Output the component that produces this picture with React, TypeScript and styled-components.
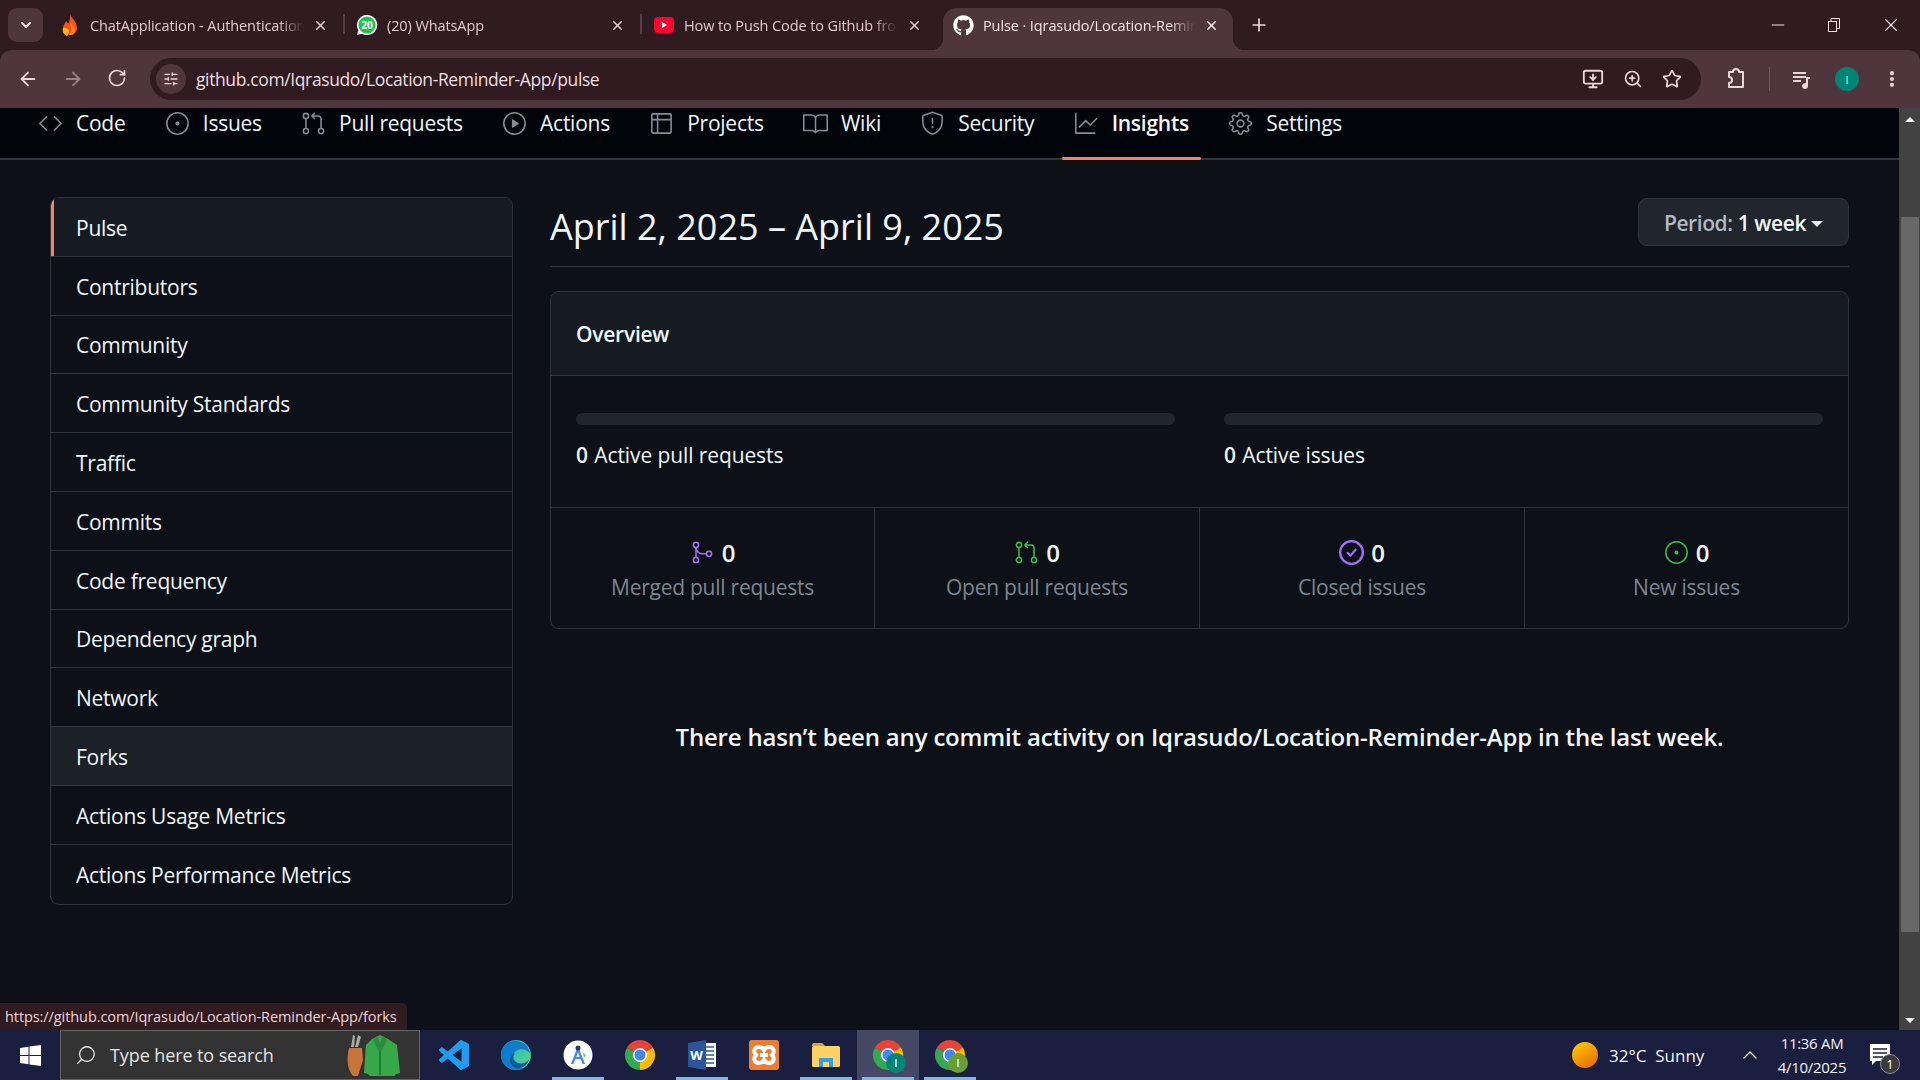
import React from "react";
import styled, { createGlobalStyle } from "styled-components";
import {
  ArrowLeft,
  ArrowRight,
  ChevronDown,
  ChevronUp,
  Minus,
  MonitorDown,
  MoreVertical,
  Plus,
  RotateCw,
  Search,
  SlidersHorizontal,
  Star,
  X,
  ZoomIn,
} from "lucide-react";
import { FaGithub } from "react-icons/fa";
import {
  GoBook,
  GoCode,
  GoGear,
  GoGitMerge,
  GoGitPullRequest,
  GoGraph,
  GoIssueOpened,
  GoPlay,
  GoShield,
  GoTable,
} from "react-icons/go";

const GlobalStyle = createGlobalStyle`
  html, body {
    margin: 0;
    padding: 0;
    background: #0d1117;
    overflow: hidden;
  }
  * {
    box-sizing: border-box;
  }
`;

const UI_FONT = `"Open Sans", "Noto Sans", sans-serif`;

const Screen = styled.div`
  width: 1920px;
  height: 1080px;
  position: relative;
  display: flex;
  flex-direction: column;
  overflow: hidden;
  font-family: ${UI_FONT};
  background: #301b20;
`;

/* browser chrome */

const TabStrip = styled.div`
  height: 50px;
  flex: none;
  display: flex;
  align-items: flex-end;
  padding-left: 8px;
  background: #301b20;
`;

const TabSearch = styled.div`
  width: 35px;
  height: 34px;
  margin: 0 6px 8px 0;
  border-radius: 9px;
  background: #4f363c;
  color: #f0dfe2;
  display: flex;
  align-items: center;
  justify-content: center;
`;

const Tab = styled.div<{ $active?: boolean; $last?: boolean }>`
  position: relative;
  width: ${(p) => (p.$active ? "290px" : "297px")};
  margin-left: ${(p) => (p.$active ? "3px" : "0")};
  height: 42px;
  flex: none;
  display: flex;
  align-items: center;
  gap: 9px;
  padding: 0 18px 8px 10px;
  color: ${(p) => (p.$active ? "#f3e4e7" : "#e3c7cd")};
  background: ${(p) => (p.$active ? "#4f363c" : "transparent")};
  border-radius: 14px 14px 0 0;
  font-size: 14.5px;
  letter-spacing: -0.1px;

  ${(p) =>
    p.$active &&
    `
    padding-left: 9px;
    padding-right: 14px;
    &::after {
      content: "";
      position: absolute;
      right: -12px;
      bottom: 0;
      width: 12px;
      height: 12px;
      background: radial-gradient(circle at 100% 0, transparent 12px, #4f363c 12.5px);
    }
    &::before {
      content: "";
      position: absolute;
      left: -12px;
      bottom: 0;
      width: 12px;
      height: 12px;
      background: radial-gradient(circle at 0 0, transparent 12px, #4f363c 12.5px);
    }
  `}

  ${(p) =>
    !p.$active &&
    !p.$last &&
    `
    &::after {
      content: "";
      position: absolute;
      right: 1px;
      top: 6px;
      width: 2px;
      height: 20px;
      background: #55404a;
    }
  `}
`;

const Favicon = styled.span`
  width: 22px;
  height: 22px;
  flex: none;
  display: flex;
  align-items: center;
  justify-content: center;
`;

const TabTitle = styled.span`
  flex: 1;
  min-width: 0;
  white-space: nowrap;
  overflow: hidden;
  -webkit-mask-image: linear-gradient(90deg, #000 88%, transparent);
  mask-image: linear-gradient(90deg, #000 88%, transparent);
`;

const NewTab = styled.div`
  width: 26px;
  height: 26px;
  margin: 0 0 12px 13px;
  color: #f0d9de;
  display: flex;
  align-items: center;
  justify-content: center;
`;

const WindowControls = styled.div`
  margin-left: auto;
  height: 50px;
  padding-right: 18px;
  display: flex;
  align-items: center;
  gap: 39px;
  color: #f3e4e7;
`;

const Toolbar = styled.div`
  height: 58px;
  flex: none;
  display: flex;
  align-items: center;
  background: #4f363c;
  border-radius: 12px 12px 0 0;
  padding-left: 17px;
  color: #ecd6da;
`;

const NavButtons = styled.div`
  width: 133px;
  display: flex;
  gap: 23px;
`;

const Omnibox = styled.div`
  width: 1551px;
  height: 42px;
  flex: none;
  display: flex;
  align-items: center;
  padding: 0 19px 0 6px;
  background: #301b20;
  border-radius: 21px;
  color: #ecd6da;
`;

const TuneBadge = styled.span`
  width: 30px;
  height: 30px;
  flex: none;
  margin-right: 10px;
  border-radius: 50%;
  background: #4f363c;
  display: flex;
  align-items: center;
  justify-content: center;
`;

const Url = styled.span`
  flex: 1;
  font-size: 17.5px;
  letter-spacing: -0.38px;
  color: #eedfe2;
`;

const OmniActions = styled.div`
  display: flex;
  align-items: center;
  gap: 19px;
`;

const ToolActions = styled.div`
  flex: 1;
  display: flex;
  align-items: center;
  padding-left: 24px;
`;

const ToolDivider = styled.span`
  width: 1px;
  height: 24px;
  margin: 0 22px;
  background: #6d555b;
`;

const Avatar = styled.span`
  width: 24px;
  height: 24px;
  margin: 0 23px;
  border-radius: 50%;
  background: #008577;
  color: #cfeee9;
  font-size: 11px;
  display: flex;
  align-items: center;
  justify-content: center;
`;

/* page */

const Viewport = styled.div`
  flex: 1;
  min-height: 0;
  display: flex;
`;

const Page = styled.div`
  flex: 1;
  min-width: 0;
  background: #0d1117;
  color: #f0f6fc;
  letter-spacing: -0.25px;
`;

const RepoNav = styled.nav`
  height: 52px;
  display: flex;
  align-items: flex-start;
  gap: 15.25px;
  padding-left: 26px;
  background: #010409;
  border-bottom: 2px solid #30363d;
`;

const RepoNavItem = styled.div<{ $active?: boolean }>`
  position: relative;
  height: 50px;
  display: flex;
  align-items: flex-start;
  gap: 13px;
  padding: 0 12px;
  font-size: 21px;
  line-height: 30px;
  font-weight: ${(p) => (p.$active ? 600 : 400)};
  color: #f0f6fc;

  svg {
    margin-top: 3px;
    color: #848d97;
  }

  ${(p) =>
    p.$active &&
    `
    &::after {
      content: "";
      position: absolute;
      left: 0;
      right: 0;
      bottom: -2px;
      height: 3px;
      border-radius: 2px;
      background: #f78166;
    }
  `}
`;

const Content = styled.div`
  display: flex;
  align-items: flex-start;
  gap: 37px;
  padding: 37px 50px 0 50px;
`;

const Sidebar = styled.div`
  width: 463px;
  flex: none;
  border: 1px solid #30363d;
  border-radius: 9px;
  overflow: hidden;
`;

const SideItem = styled.div<{ $active?: boolean; $hover?: boolean }>`
  position: relative;
  height: 58.8px;
  display: flex;
  align-items: center;
  padding: 2px 0 0 25px;
  font-size: 21px;
  color: #f0f6fc;
  border-bottom: 1px solid #30363d;
  background: ${(p) => (p.$active ? "#161b22" : p.$hover ? "#1c2128" : "transparent")};

  &:last-child {
    border-bottom: 0;
  }

  ${(p) =>
    p.$active &&
    `
    &::before {
      content: "";
      position: absolute;
      left: 0;
      top: 0;
      bottom: 0;
      width: 3px;
      background: #f78166;
    }
  `}
`;

const Main = styled.main`
  flex: 1;
  min-width: 0;
`;

const PeriodHeader = styled.div`
  height: 70px;
  display: flex;
  align-items: flex-start;
  justify-content: space-between;
  border-bottom: 1px solid #30363d;
  margin-bottom: 24px;
`;

const DateRange = styled.h1`
  margin: 0;
  font-size: 36px;
  line-height: 60px;
  font-weight: 400;
  letter-spacing: 0;
`;

const PeriodButton = styled.div`
  width: 211px;
  height: 48px;
  margin-top: 1px;
  padding-top: 1px;
  display: flex;
  align-items: center;
  justify-content: center;
  gap: 5px;
  background: #21262d;
  border: 1px solid #30363d;
  border-radius: 9px;
  font-size: 21px;
  color: #b1bac4;
  font-weight: 600;
  letter-spacing: -0.4px;

  b {
    color: #f0f6fc;
    font-weight: 600;
  }
`;

const Caret = styled.span`
  width: 0;
  height: 0;
  margin-top: 3px;
  border-left: 6px solid transparent;
  border-right: 6px solid transparent;
  border-top: 6px solid #e6edf3;
`;

const OverviewBox = styled.section`
  border: 1px solid #30363d;
  border-radius: 9px;
  overflow: hidden;
`;

const OverviewHeader = styled.div`
  height: 84px;
  display: flex;
  align-items: center;
  padding-left: 25px;
  background: #161b22;
  border-bottom: 1px solid #30363d;
  font-size: 21px;
  font-weight: 600;
`;

const ActiveGrid = styled.div`
  height: 132px;
  display: grid;
  grid-template-columns: 1fr 1fr;
  gap: 49px;
  padding: 37px 25px 0 25px;
  border-bottom: 1px solid #30363d;
`;

const ProgressTrack = styled.div`
  height: 12px;
  border-radius: 6px;
  background: #21262d;
`;

const ActiveLabel = styled.div`
  margin-top: 14px;
  font-size: 21px;
  line-height: 32px;
  letter-spacing: -0.1px;

  b {
    font-weight: 600;
    margin-right: 1px;
  }
`;

const StatGrid = styled.div`
  height: 120px;
  display: grid;
  grid-template-columns: 323px 325px 325px 1fr;
`;

const StatCell = styled.div`
  display: flex;
  flex-direction: column;
  align-items: center;
  padding-top: 28px;
  border-left: 1px solid #30363d;

  &:first-child {
    border-left: 0;
  }
`;

const StatValue = styled.div<{ $color: string }>`
  display: flex;
  align-items: center;
  gap: 7px;
  height: 32px;
  font-size: 24px;
  font-weight: 600;

  svg {
    color: ${(p) => p.$color};
  }
`;

const StatLabel = styled.div`
  margin-top: 3px;
  font-size: 21px;
  line-height: 32px;
  color: #7d8590;
`;

const NoActivity = styled.p`
  margin: 90px 0 0;
  text-align: center;
  font-size: 24px;
  line-height: 36px;
  font-weight: 600;
  letter-spacing: -0.18px;
`;

const StatusBubble = styled.div`
  position: absolute;
  left: 0;
  bottom: 50px;
  height: 27px;
  width: 407px;
  padding-left: 5px;
  display: flex;
  align-items: center;
  background: #301b20;
  border-top-right-radius: 5px;
  color: #eed3d8;
  font-size: 14.5px;
  letter-spacing: -0.08px;
`;

const Scrollbar = styled.div`
  width: 21px;
  flex: none;
  position: relative;
  background: #424242;
`;

const ScrollArrow = styled.span<{ $down?: boolean }>`
  position: absolute;
  left: 6px;
  ${(p) => (p.$down ? "bottom: 7px;" : "top: 9px;")}
  width: 0;
  height: 0;
  border-left: 5px solid transparent;
  border-right: 5px solid transparent;
  ${(p) => (p.$down ? "border-top: 5px solid #fff;" : "border-bottom: 5px solid #fff;")}
`;

const ScrollThumb = styled.div`
  position: absolute;
  left: 2px;
  right: 1px;
  top: 109px;
  height: 715px;
  background: #686868;
`;

/* taskbar */

const Taskbar = styled.div`
  height: 50px;
  flex: none;
  display: flex;
  align-items: stretch;
  background: #1a1e3f;
  color: #f2f2f2;
`;

const StartButton = styled.div`
  width: 60px;
  flex: none;
  display: flex;
  align-items: center;
  justify-content: center;
`;

const SearchBox = styled.div`
  width: 360px;
  flex: none;
  display: flex;
  align-items: center;
  padding-left: 14px;
  gap: 13px;
  background: #333333;
  border: 1px solid #666666;
  color: #e4e4e4;
  font-size: 18px;
  letter-spacing: -0.1px;
  margin-right: 3px;
`;

const SearchHero = styled.span`
  margin-left: auto;
  margin-right: 18px;
  display: flex;
`;

const TaskIcons = styled.div`
  display: flex;
`;

const TaskIcon = styled.div<{ $running?: boolean; $current?: boolean }>`
  position: relative;
  width: 62px;
  display: flex;
  align-items: center;
  justify-content: center;
  background: ${(p) => (p.$current ? "#454865" : "transparent")};

  ${(p) =>
    p.$running &&
    `
    &::after {
      content: "";
      position: absolute;
      left: 5px;
      right: 5px;
      bottom: 0;
      height: 3px;
      background: #76b9ed;
    }
  `}
`;

const Tray = styled.div`
  margin-left: auto;
  display: flex;
  align-items: center;
  padding-right: 30px;
`;

const Weather = styled.span`
  margin-left: 11px;
  width: 129px;
  font-size: 17px;
  letter-spacing: 0;
  white-space: pre;
`;

const Clock = styled.div`
  width: 100px;
  margin: 0 8px 0 0;
  text-align: center;
  font-size: 15px;
  line-height: 24px;
  letter-spacing: -0.3px;
`;

const NotifyWrap = styled.span`
  position: relative;
  display: flex;
`;

const NotifyCount = styled.span`
  position: absolute;
  right: -10px;
  bottom: -8px;
  width: 20px;
  height: 20px;
  border-radius: 50%;
  background: #3a3a3f;
  border: 1px solid #888;
  color: #fff;
  font-size: 13px;
  display: flex;
  align-items: center;
  justify-content: center;
`;

/* drawn logos */

const FlameIcon = () => (
  <svg width="18" height="24" viewBox="0 0 18 24">
    <path d="M9 1c1 4 7 7 7 14a7 7 0 0 1-14 0c0-3 2-4 3-7 1 1 2 2 2 3 2-3 2-6 2-10z" fill="#f4511e" />
    <path d="M2 15c2-1 6 0 6 3s-2 5-2 5a7 7 0 0 1-4-8z" fill="#ffb300" />
    <path d="M9 10c3 2 5 4 5 7a5 5 0 0 1-6 5c3-3 3-7 1-12z" fill="#ff8f00" />
  </svg>
);

const WhatsAppIcon = () => (
  <svg width="24" height="24" viewBox="0 0 24 24">
    <path d="M12 1a11 11 0 0 0-9.4 16.6L1 23l5.6-1.5A11 11 0 1 0 12 1z" fill="#fff" />
    <circle cx="12" cy="12" r="9.4" fill="#1fc14f" />
    <text x="12" y="16" textAnchor="middle" fontSize="11" fontWeight="700" fontFamily="Open Sans, sans-serif" fill="#fff">
      20
    </text>
  </svg>
);

const YouTubeIcon = () => (
  <svg width="22" height="22" viewBox="0 0 22 22">
    <rect x="1" y="3" width="20" height="16" rx="4" fill="#f5072f" />
    <path d="M9 8l5 3-5 3z" fill="#fff" />
  </svg>
);

const WindowsLogo = () => (
  <svg width="21" height="21" viewBox="0 0 21 21" fill="#fff">
    <path d="M0 3l8.5-1.2V10H0zM9.5 1.6L21 0v10H9.5zM0 11h8.5v8.2L0 18zM9.5 11H21v10l-11.5-1.6z" />
  </svg>
);

const JacketHero = () => (
  <svg width="56" height="46" viewBox="0 0 56 46">
    <path d="M6 15l2-12 2 1-1 11zM10 15l3-12 3 2-3 10z" fill="#a8a8a8" />
    <path d="M4 16h13l1 12-5 16H8C3 38 1 30 4 16z" fill="#c8743a" />
    <path d="M27 7l8-4 8 4 9 6 3 28-4 1-2 2H25l-2-2-4-1 2-28z" fill="#37a84a" />
    <path d="M32 4l3 8 3-8 4 4-7 14-7-14z" fill="#2b8c3d" />
    <path d="M35 20v23" stroke="#1f7030" strokeWidth="1.5" />
  </svg>
);

const VsCodeLogo = () => (
  <svg width="30" height="30" viewBox="0 0 24 24">
    <path
      d="M23.15 2.587L18.21.21a1.494 1.494 0 0 0-1.705.29l-9.46 8.63-4.12-3.128a.999.999 0 0 0-1.276.057L.327 7.261A1 1 0 0 0 .326 8.74L3.899 12 .326 15.26a1 1 0 0 0 .001 1.479L1.65 17.94a.999.999 0 0 0 1.276.057l4.12-3.128 9.46 8.63a1.492 1.492 0 0 0 1.704.29l4.942-2.377A1.5 1.5 0 0 0 24 20.06V3.939a1.5 1.5 0 0 0-.85-1.352zm-5.146 14.861L10.826 12l7.178-5.448v10.896z"
      fill="#1f9cf0"
    />
  </svg>
);

const EdgeLogo = () => (
  <svg width="30" height="30" viewBox="0 0 30 30">
    <defs>
      <linearGradient id="edgeTop" x1="0" y1="0" x2="1" y2="1">
        <stop offset="0" stopColor="#1aa0d8" />
        <stop offset="1" stopColor="#5fe07a" />
      </linearGradient>
    </defs>
    <circle cx="15" cy="15" r="15" fill="url(#edgeTop)" />
    <path d="M0 15C0 6 7 1 14 1c8 0 14 5 15 12-4-4-10-5-14-2-4 3-5 9-1 13 2 3 6 5 9 4-3 2-5 2-8 2C7 30 0 24 0 15z" fill="#0f7dc9" />
    <path d="M13 20c3 4 10 5 15 0-2 6-8 9-13 8-4-1-6-4-6-8 0-3 2-6 5-7-2 2-2 5-1 7z" fill="#0c59a4" />
  </svg>
);

const StudioLogo = () => (
  <svg width="30" height="30" viewBox="0 0 30 30">
    <circle cx="15" cy="15" r="14.5" fill="#fff" />
    <path d="M15 6l-7 18h2.4l2-5h5.2l2 5H22zM13.300 17L15 12l1.700 5z" fill="#4285f4" />
    <circle cx="15" cy="8" r="2.500" fill="#2a3a55" />
    <path d="M20 13l3 2-2 3z" fill="#3ddc84" />
  </svg>
);

const ChromeLogo = ({ badge }: { badge?: string }) => (
  <svg width="30" height="30" viewBox="0 0 30 30" style={{ overflow: "visible" }}>
    <path d="M15 15L2 7.500A15 15 0 0 1 28 7.500z" fill="#ea4335" />
    <path d="M15 15L28 7.500A15 15 0 0 1 15 30z" fill="#fbbc04" />
    <path d="M15 15L15 30A15 15 0 0 1 2 7.500z" fill="#34a853" />
    <circle cx="15" cy="15" r="7" fill="#fff" />
    <circle cx="15" cy="15" r="5.500" fill="#4285f4" />
    {badge && (
      <>
        <circle cx="23" cy="23" r="10" fill={badge} />
        <rect x="22.200" y="19" width="1.600" height="8" fill="#cfeee0" />
      </>
    )}
  </svg>
);

const WordLogo = () => (
  <svg width="28" height="30" viewBox="0 0 28 30">
    <rect x="10" y="3" width="18" height="24" fill="#fff" />
    <path d="M12 7h14M12 11h14M12 15h14M12 19h14M12 23h14" stroke="#2b579a" strokeWidth="1.600" />
    <path d="M0 3l18-3v30L0 27z" fill="#2b579a" />
    <text x="8.500" y="20" textAnchor="middle" fontSize="13" fontWeight="700" fontFamily="Open Sans, sans-serif" fill="#fff">
      W
    </text>
  </svg>
);

const XamppLogo = () => (
  <svg width="30" height="30" viewBox="0 0 30 30">
    <rect width="30" height="30" rx="3" fill="#ed7d31" />
    <path
      d="M10 7c-5 0-6 5-3 8-3 3-2 8 3 8 2 0 4-1 5-3 1 2 3 3 5 3 5 0 6-5 3-8 3-3 2-8-3-8-2 0-4 1-5 3-1-2-3-3-5-3zM11 15h8"
      fill="none"
      stroke="#fff"
      strokeWidth="4"
    />
  </svg>
);

const FolderLogo = () => (
  <svg width="28" height="26" viewBox="0 0 28 26">
    <path d="M0 3a2 2 0 0 1 2-2h8l3 3h-13z" fill="#e0a81c" />
    <rect y="4" width="28" height="21" rx="1.500" fill="#fcd364" />
    <path d="M7 25v-9h14v9h-4v-5h-6v5z" fill="#2f9fe8" />
  </svg>
);

const SunDisc = () => (
  <svg width="26" height="26" viewBox="0 0 26 26">
    <defs>
      <linearGradient id="sun" x1="0.200" y1="0" x2="0.800" y2="1">
        <stop offset="0" stopColor="#ffc800" />
        <stop offset="1" stopColor="#e86a00" />
      </linearGradient>
    </defs>
    <circle cx="13" cy="13" r="13" fill="url(#sun)" />
  </svg>
);

const RestoreIcon = () => (
  <svg width="14" height="14" viewBox="0 0 14 14" fill="none" stroke="currentColor" strokeWidth="1">
    <rect x="1.500" y="3.500" width="8" height="10" />
    <path d="M4 3.500V.500h8.500v10H9.500" />
  </svg>
);

const MediaIcon = () => (
  <svg width="20" height="20" viewBox="0 0 20 20" fill="currentColor">
    <path d="M1 3h13v2H1zM1 7h13v2H1zM1 11h8v2H1z" />
    <path d="M14 8h4v2h-2v7a3 3 0 1 1-2-2.800z" />
  </svg>
);

const ExtensionIcon = () => (
  <svg width="22" height="24" viewBox="0 0 22 24" fill="none" stroke="currentColor" strokeWidth="2">
    <path d="M4 5h4a3 3 0 0 1 6 0h4v15H4v-4a3 3 0 0 0 0-6z" strokeLinejoin="round" />
  </svg>
);

const NotificationIcon = () => (
  <svg width="20" height="22" viewBox="0 0 20 22">
    <path d="M0 0h20v17H6l-4 4v-4H0z" fill="#fff" />
    <path d="M3 5h14M3 9h14M3 13h10" stroke="#1a1e3f" strokeWidth="1.500" />
  </svg>
);

const ClosedIssueIcon = () => (
  <svg width="25" height="25" viewBox="0 0 16 16" fill="none" stroke="currentColor">
    <circle cx="8" cy="8" r="7.250" strokeWidth="1.500" />
    <path d="M5.500 8.200l1.800 1.800 3.300-3.800" strokeWidth="1.400" strokeLinecap="round" strokeLinejoin="round" />
  </svg>
);

const REPO_NAV = [
  { label: "Code", icon: <GoCode size={25} /> },
  { label: "Issues", icon: <GoIssueOpened size={25} /> },
  { label: "Pull requests", icon: <GoGitPullRequest size={25} /> },
  { label: "Actions", icon: <GoPlay size={25} /> },
  { label: "Projects", icon: <GoTable size={25} /> },
  { label: "Wiki", icon: <GoBook size={25} /> },
  { label: "Security", icon: <GoShield size={25} /> },
  { label: "Insights", icon: <GoGraph size={25} />, active: true },
  { label: "Settings", icon: <GoGear size={25} /> },
];

const SIDE_ITEMS = [
  "Pulse",
  "Contributors",
  "Community",
  "Community Standards",
  "Traffic",
  "Commits",
  "Code frequency",
  "Dependency graph",
  "Network",
  "Forks",
  "Actions Usage Metrics",
  "Actions Performance Metrics",
];

const STATS = [
  { label: "Merged pull requests", color: "#a371f7", icon: <GoGitMerge size={25} /> },
  { label: "Open pull requests", color: "#3fb950", icon: <GoGitPullRequest size={25} /> },
  { label: "Closed issues", color: "#a371f7", icon: <ClosedIssueIcon /> },
  { label: "New issues", color: "#3fb950", icon: <GoIssueOpened size={25} /> },
];

const TASK_ICONS = [
  { icon: <VsCodeLogo /> },
  { icon: <EdgeLogo /> },
  { icon: <StudioLogo />, running: true },
  { icon: <ChromeLogo /> },
  { icon: <WordLogo />, running: true },
  { icon: <XamppLogo /> },
  { icon: <FolderLogo />, running: true },
  { icon: <ChromeLogo badge="#008577" />, running: true, current: true },
  { icon: <ChromeLogo badge="#6a9e35" />, running: true },
];

const App = () => {
  return (
    <>
      <GlobalStyle />
      <Screen>
        <TabStrip>
          <TabSearch>
            <ChevronDown size={16} strokeWidth={3} />
          </TabSearch>
          <Tab>
            <Favicon><FlameIcon /></Favicon>
            <TabTitle>ChatApplication - Authentication</TabTitle>
            <X size={15} strokeWidth={2.5} />
          </Tab>
          <Tab>
            <Favicon><WhatsAppIcon /></Favicon>
            <TabTitle>(20) WhatsApp</TabTitle>
            <X size={15} strokeWidth={2.5} />
          </Tab>
          <Tab $last>
            <Favicon><YouTubeIcon /></Favicon>
            <TabTitle>How to Push Code to Github from</TabTitle>
            <X size={15} strokeWidth={2.5} />
          </Tab>
          <Tab $active>
            <Favicon><FaGithub size={21} color="#fff" /></Favicon>
            <TabTitle>Pulse · Iqrasudo/Location-Reminder</TabTitle>
            <X size={15} strokeWidth={2.5} />
          </Tab>
          <NewTab>
            <Plus size={20} />
          </NewTab>
          <WindowControls>
            <Minus size={20} strokeWidth={1.2} />
            <RestoreIcon />
            <X size={22} strokeWidth={1.2} />
          </WindowControls>
        </TabStrip>

        <Toolbar>
          <NavButtons>
            <ArrowLeft size={22} />
            <ArrowRight size={22} color="#97808a" />
            <RotateCw size={20} />
          </NavButtons>
          <Omnibox>
            <TuneBadge>
              <SlidersHorizontal size={16} />
            </TuneBadge>
            <Url>github.com/Iqrasudo/Location-Reminder-App/pulse</Url>
            <OmniActions>
              <MonitorDown size={22} />
              <ZoomIn size={20} />
              <Star size={20} />
            </OmniActions>
          </Omnibox>
          <ToolActions>
            <ExtensionIcon />
            <ToolDivider />
            <MediaIcon />
            <Avatar>I</Avatar>
            <MoreVertical size={20} strokeWidth={3} />
          </ToolActions>
        </Toolbar>

        <Viewport>
          <Page>
            <RepoNav>
              {REPO_NAV.map((item) => (
                <RepoNavItem key={item.label} $active={item.active}>
                  {item.icon}
                  {item.label}
                </RepoNavItem>
              ))}
            </RepoNav>

            <Content>
              <Sidebar>
                {SIDE_ITEMS.map((name) => (
                  <SideItem key={name} $active={name === "Pulse"} $hover={name === "Forks"}>
                    {name}
                  </SideItem>
                ))}
              </Sidebar>

              <Main>
                <PeriodHeader>
                  <DateRange>April 2, 2025 – April 9, 2025</DateRange>
                  <PeriodButton>
                    <span>
                      Period: <b>1 week</b>
                    </span>
                    <Caret />
                  </PeriodButton>
                </PeriodHeader>

                <OverviewBox>
                  <OverviewHeader>Overview</OverviewHeader>
                  <ActiveGrid>
                    <div>
                      <ProgressTrack />
                      <ActiveLabel>
                        <b>0</b> Active pull requests
                      </ActiveLabel>
                    </div>
                    <div>
                      <ProgressTrack />
                      <ActiveLabel>
                        <b>0</b> Active issues
                      </ActiveLabel>
                    </div>
                  </ActiveGrid>
                  <StatGrid>
                    {STATS.map((stat) => (
                      <StatCell key={stat.label}>
                        <StatValue $color={stat.color}>
                          {stat.icon}
                          <span>0</span>
                        </StatValue>
                        <StatLabel>{stat.label}</StatLabel>
                      </StatCell>
                    ))}
                  </StatGrid>
                </OverviewBox>

                <NoActivity>
                  There hasn’t been any commit activity on Iqrasudo/Location-Reminder-App in the last week.
                </NoActivity>
              </Main>
            </Content>
          </Page>
          <Scrollbar>
            <ScrollArrow />
            <ScrollThumb />
            <ScrollArrow $down />
          </Scrollbar>
        </Viewport>

        <StatusBubble>https://github.com/Iqrasudo/Location-Reminder-App/forks</StatusBubble>

        <Taskbar>
          <StartButton>
            <WindowsLogo />
          </StartButton>
          <SearchBox>
            <Search size={22} strokeWidth={1.5} style={{ transform: "scaleX(-1)" }} />
            Type here to search
            <SearchHero>
              <JacketHero />
            </SearchHero>
          </SearchBox>
          <TaskIcons>
            {TASK_ICONS.map((item, i) => (
              <TaskIcon key={i} $running={item.running} $current={item.current}>
                {item.icon}
              </TaskIcon>
            ))}
          </TaskIcons>
          <Tray>
            <SunDisc />
            <Weather>32°C  Sunny</Weather>
            <ChevronUp size={24} strokeWidth={1.4} />
            <Clock>
              11:36 AM
              <br />
              4/10/2025
            </Clock>
            <NotifyWrap>
              <NotificationIcon />
              <NotifyCount>1</NotifyCount>
            </NotifyWrap>
          </Tray>
        </Taskbar>
      </Screen>
    </>
  );
};

export default App;
